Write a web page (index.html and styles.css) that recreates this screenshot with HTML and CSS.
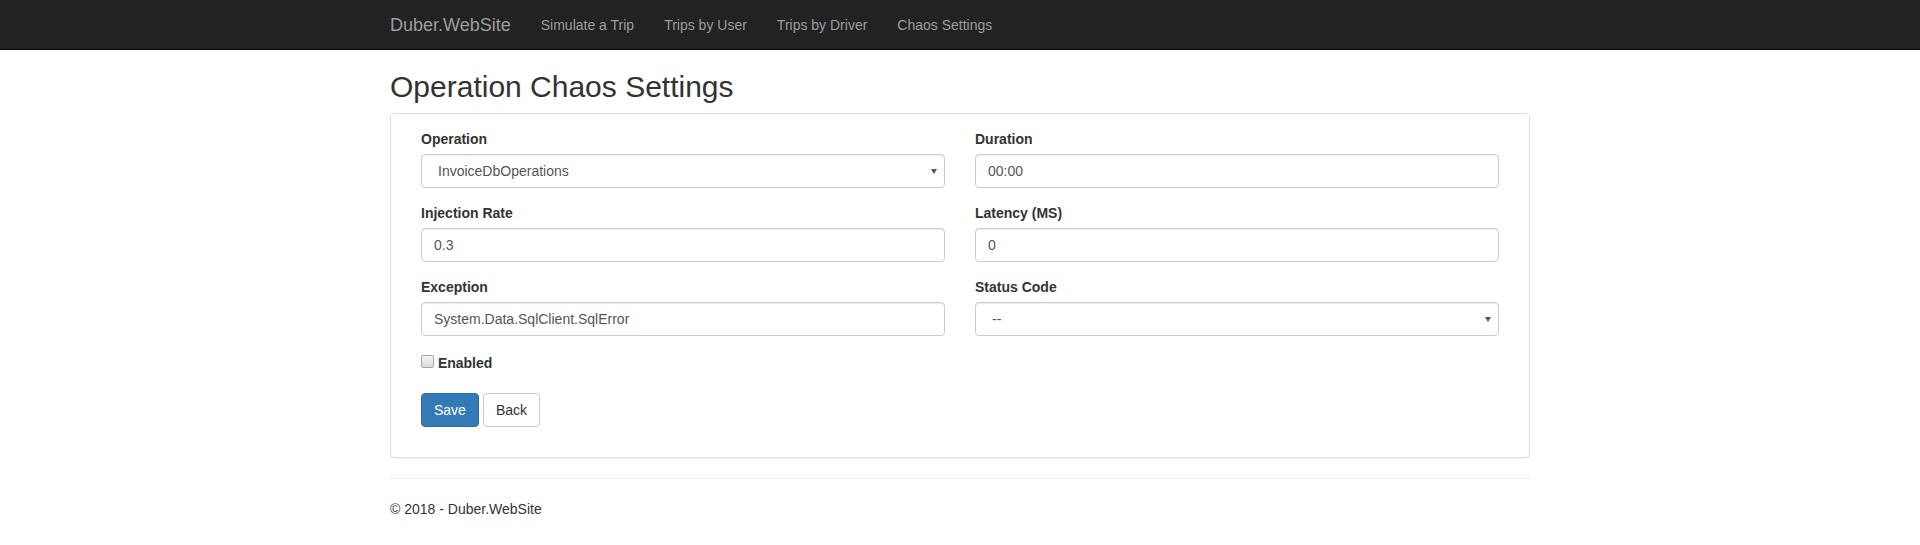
FILE: index.html
```html
<!DOCTYPE html>
<html lang="en">
<head>
<meta charset="utf-8">
<title>Operation Chaos Settings - Duber.WebSite</title>
<link rel="stylesheet" href="styles.css">
</head>
<body>
<nav class="navbar">
  <div class="nav-container">
    <a class="navbar-brand" href="#">Duber.WebSite</a>
    <ul class="nav">
      <li><a href="#">Simulate a Trip</a></li>
      <li><a href="#">Trips by User</a></li>
      <li><a href="#">Trips by Driver</a></li>
      <li><a href="#">Chaos Settings</a></li>
    </ul>
  </div>
</nav>
<div class="container">
  <h2 class="page-title">Operation Chaos Settings</h2>
  <div class="panel">
    <form class="panel-body">
      <div class="form-grid">
        <div class="form-group">
          <label class="control-label">Operation</label>
          <div class="select-wrap">
            <select class="form-control select">
              <option>InvoiceDbOperations</option>
            </select>
          </div>
        </div>
        <div class="form-group">
          <label class="control-label">Duration</label>
          <input class="form-control" type="text" value="00:00">
        </div>
        <div class="form-group">
          <label class="control-label">Injection Rate</label>
          <input class="form-control" type="text" value="0.3">
        </div>
        <div class="form-group">
          <label class="control-label">Latency (MS)</label>
          <input class="form-control" type="text" value="0">
        </div>
        <div class="form-group">
          <label class="control-label">Exception</label>
          <input class="form-control" type="text" value="System.Data.SqlClient.SqlError">
        </div>
        <div class="form-group">
          <label class="control-label">Status Code</label>
          <div class="select-wrap">
            <select class="form-control select">
              <option>--</option>
            </select>
          </div>
        </div>
      </div>
      <div class="check-row">
        <input class="check" type="checkbox" id="enabled"> <label class="check-label" for="enabled">Enabled</label>
      </div>
      <div class="button-row">
        <button type="button" class="btn btn-primary">Save</button>
        <button type="button" class="btn btn-default">Back</button>
      </div>
    </form>
  </div>
  <hr class="divider">
  <footer class="footer">
    <p>&copy; 2018 - Duber.WebSite</p>
  </footer>
</div>
</body>
</html>
```
FILE: styles.css
```css
* {
  box-sizing: border-box;
}

html, body {
  margin: 0;
  padding: 0;
}

body {
  font-family: "Liberation Sans", Arial, Helvetica, sans-serif;
  font-size: 14px;
  line-height: 1.42857143;
  color: #333;
  background: #fff;
}

a {
  text-decoration: none;
}

/* Navbar */
.navbar {
  background-color: #222;
  border-bottom: 1px solid #080808;
  height: 50px;
}

.nav-container {
  width: 1170px;
  margin: 0 auto;
  padding: 0 15px;
  display: flex;
  align-items: flex-start;
}

.navbar-brand {
  margin-left: -15px;
  padding: 15px;
  font-size: 18px;
  line-height: 20px;
  height: 49px;
  color: #9d9d9d;
}

.nav {
  display: flex;
  list-style: none;
  margin: 0;
  padding: 0;
}

.nav a {
  display: block;
  padding: 15px;
  line-height: 20px;
  color: #9d9d9d;
}

/* Main */
.container {
  width: 1170px;
  margin: 0 auto;
  padding: 0 15px;
}

.page-title {
  font-size: 30px;
  font-weight: 500;
  line-height: 1.1;
  margin: 20px 0 10px;
  color: #333;
}

.panel {
  border: 1px solid #ddd;
  border-radius: 4px;
  box-shadow: 0 1px 1px rgba(0, 0, 0, 0.05);
  margin-bottom: 20px;
  background: #fff;
}

.panel-body {
  display: block;
  padding: 15px;
  margin: 0;
}

.form-grid {
  display: grid;
  grid-template-columns: 1fr 1fr;
  column-gap: 30px;
  padding: 0 15px;
}

.form-group {
  margin-bottom: 15px;
}

.control-label {
  display: block;
  font-weight: bold;
  margin-bottom: 5px;
  line-height: 20px;
}

.form-control {
  display: block;
  width: 100%;
  height: 34px;
  padding: 6px 12px;
  font-family: inherit;
  font-size: 14px;
  line-height: 1.42857143;
  color: #555;
  background-color: #fff;
  border: 1px solid #ccc;
  border-radius: 4px;
  box-shadow: inset 0 1px 1px rgba(0, 0, 0, 0.075);
  margin: 0;
}

.select-wrap {
  position: relative;
}

.select {
  appearance: none;
  -webkit-appearance: none;
  padding-left: 16px;
  padding-right: 24px;
}

.select-wrap::after {
  content: "";
  position: absolute;
  right: 8px;
  top: 15px;
  width: 0;
  height: 0;
  border-left: 3px solid transparent;
  border-right: 3px solid transparent;
  border-top: 5px solid #555;
  pointer-events: none;
}

.check-row {
  padding: 0 15px;
  margin-bottom: 20px;
  line-height: 20px;
}

.check {
  appearance: none;
  -webkit-appearance: none;
  display: inline-block;
  margin: 4px 0 0;
  width: 13px;
  height: 13px;
  vertical-align: baseline;
  border: 1px solid #a8a8a8;
  border-radius: 2px;
  background: linear-gradient(#f4f4f4, #dcdcdc);
}

.check-label {
  font-weight: bold;
}

.button-row {
  padding: 0 15px;
  margin-bottom: 15px;
  display: flex;
  gap: 4px;
}

.btn {
  display: inline-block;
  height: 34px;
  padding: 6px 12px;
  font-family: inherit;
  font-size: 14px;
  line-height: 1.42857143;
  border: 1px solid transparent;
  border-radius: 4px;
  margin: 0;
  cursor: pointer;
}

.btn-primary {
  color: #fff;
  background-color: #337ab7;
  border-color: #2e6da4;
}

.btn-default {
  color: #333;
  background-color: #fff;
  border-color: #ccc;
}

.divider {
  margin: 20px 0;
  border: 0;
  border-top: 1px solid #eee;
  height: 0;
}

.footer p {
  margin: 0 0 10px;
}
```
